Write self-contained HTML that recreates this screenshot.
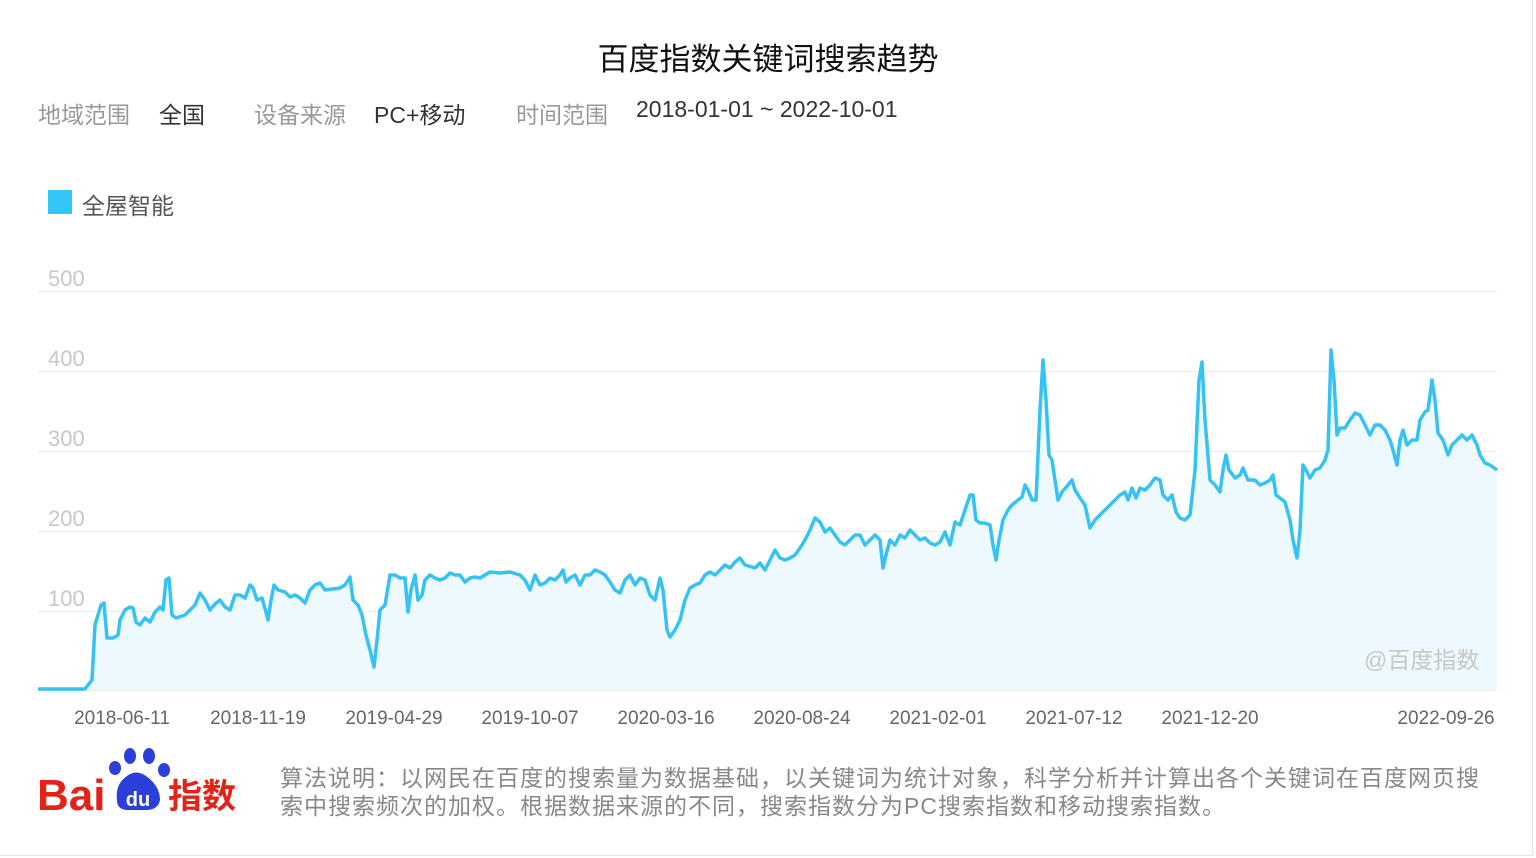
<!DOCTYPE html>
<html><head><meta charset="utf-8"><style>
body{margin:0;width:1536px;height:858px;background:#fff;overflow:hidden;font-family:"Liberation Sans","Noto Sans CJK SC",sans-serif;position:relative}
.frame{position:absolute;left:0;top:0;width:1532px;height:855px;border:1px solid #e4e4e4;border-top:none;border-left:none}
.t{position:absolute;white-space:nowrap}
</style></head><body>
<div class="frame"></div>
<div class="t" style="left:0;width:1536px;text-align:center;top:34px;font-size:31px;color:#111;font-weight:normal">百度指数关键词搜索趋势</div>
<div class="t" style="left:38px;top:96px;font-size:23px;color:#999">地域范围</div>
<div class="t" style="left:159px;top:96px;font-size:23px;color:#333">全国</div>
<div class="t" style="left:254px;top:96px;font-size:23px;color:#999">设备来源</div>
<div class="t" style="left:374px;top:96px;font-size:23px;color:#333">PC+移动</div>
<div class="t" style="left:516px;top:96px;font-size:23px;color:#999">时间范围</div>
<div class="t" style="left:636px;top:96px;font-size:23px;color:#333">2018-01-01 ~ 2022-10-01</div>
<div style="position:absolute;left:48px;top:190px;width:24px;height:24px;background:#34c5f5"></div>
<div class="t" style="left:82px;top:187px;font-size:23px;color:#555">全屋智能</div>
<svg style="position:absolute;left:0;top:0" width="1536" height="858">
<g stroke="#ececec" stroke-width="1">
<line x1="38" y1="291.5" x2="1497" y2="291.5"/><line x1="38" y1="371.5" x2="1497" y2="371.5"/><line x1="38" y1="451.5" x2="1497" y2="451.5"/><line x1="38" y1="531.5" x2="1497" y2="531.5"/><line x1="38" y1="611.5" x2="1497" y2="611.5"/><line x1="38" y1="690.5" x2="1497" y2="690.5"/>
</g>
<g fill="#c8c8c8" font-size="22" font-family="Liberation Sans,sans-serif">
<text x="48" y="286">500</text><text x="48" y="366">400</text><text x="48" y="446">300</text><text x="48" y="526">200</text><text x="48" y="606">100</text>
</g>
<polygon fill="#eef9fd" points="38,690 38,689 85,689 88,685 92,680 95,625 98,615 101,605 104,603 107,638 113,638 118,635 120,620 125,610 130,607 133,608 136,622 140,625 145,618 150,622 155,612 160,607 163,610 166,580 169,578 172,615 176,618 185,615 190,610 195,605 200,593 205,600 210,610 215,604 220,600 225,607 230,610 235,595 240,595 245,598 250,585 253,588 257,600 262,598 266,612 268,620 271,600 274,585 278,590 285,592 290,597 295,595 300,598 305,603 310,590 315,585 320,583 325,590 340,588 345,585 350,577 353,600 358,605 362,615 366,635 370,650 374,667 377,640 380,610 385,605 390,575 395,575 400,578 405,578 408,612 411,590 415,575 418,600 422,595 425,580 430,575 435,578 440,580 445,578 450,573 455,575 460,575 465,582 470,578 475,577 480,578 485,575 490,572 500,573 510,572 520,575 525,580 530,590 535,575 540,585 545,583 550,578 555,580 560,575 563,570 566,582 570,578 575,575 580,585 585,575 590,575 595,570 600,572 605,575 610,582 615,590 620,593 625,580 630,575 635,585 640,578 645,580 650,595 655,600 660,578 663,590 667,630 670,637 675,630 680,620 685,600 690,588 695,585 700,583 705,575 710,572 715,575 720,570 725,565 730,568 735,562 740,558 745,565 755,568 760,563 765,570 770,560 775,550 780,558 785,560 790,558 795,555 800,548 805,540 810,530 815,518 820,522 825,532 830,528 835,535 840,542 845,545 850,540 855,535 860,535 865,545 870,540 875,535 880,540 883,568 886,555 890,540 895,545 900,535 905,538 910,530 915,535 920,540 925,538 930,543 935,545 940,542 945,532 950,545 955,522 960,525 965,510 970,495 973,495 976,520 980,523 985,523 990,525 993,545 996,560 999,540 1003,520 1008,510 1012,505 1018,500 1022,497 1025,485 1028,490 1032,500 1036,500 1040,410 1043,360 1046,400 1049,455 1052,460 1055,480 1058,500 1062,492 1068,485 1072,480 1075,490 1080,498 1085,505 1090,528 1095,520 1100,515 1105,510 1110,505 1115,500 1120,495 1125,492 1128,500 1132,488 1136,498 1140,488 1145,490 1150,485 1155,478 1160,480 1163,495 1168,500 1172,495 1176,512 1180,518 1185,520 1190,515 1195,470 1199,380 1202,362 1205,420 1210,480 1215,485 1220,492 1223,470 1226,455 1229,470 1235,478 1240,475 1243,468 1248,480 1255,480 1260,485 1265,483 1270,480 1273,475 1276,495 1280,498 1285,502 1290,520 1293,540 1297,558 1300,530 1303,465 1306,470 1310,478 1315,470 1320,468 1325,460 1328,450 1331,350 1334,380 1337,435 1340,428 1345,428 1350,420 1355,413 1360,415 1365,425 1370,435 1375,425 1380,425 1385,430 1390,440 1393,450 1397,465 1400,440 1403,430 1407,445 1412,440 1417,440 1420,420 1425,412 1428,410 1432,380 1435,400 1438,433 1443,440 1448,455 1452,445 1457,440 1462,435 1467,440 1472,435 1477,445 1480,455 1485,463 1490,465 1497,470 1497,690"/>
<polyline fill="none" stroke="#36c2f2" stroke-width="3.5" stroke-linejoin="round" points="38,689 85,689 88,685 92,680 95,625 98,615 101,605 104,603 107,638 113,638 118,635 120,620 125,610 130,607 133,608 136,622 140,625 145,618 150,622 155,612 160,607 163,610 166,580 169,578 172,615 176,618 185,615 190,610 195,605 200,593 205,600 210,610 215,604 220,600 225,607 230,610 235,595 240,595 245,598 250,585 253,588 257,600 262,598 266,612 268,620 271,600 274,585 278,590 285,592 290,597 295,595 300,598 305,603 310,590 315,585 320,583 325,590 340,588 345,585 350,577 353,600 358,605 362,615 366,635 370,650 374,667 377,640 380,610 385,605 390,575 395,575 400,578 405,578 408,612 411,590 415,575 418,600 422,595 425,580 430,575 435,578 440,580 445,578 450,573 455,575 460,575 465,582 470,578 475,577 480,578 485,575 490,572 500,573 510,572 520,575 525,580 530,590 535,575 540,585 545,583 550,578 555,580 560,575 563,570 566,582 570,578 575,575 580,585 585,575 590,575 595,570 600,572 605,575 610,582 615,590 620,593 625,580 630,575 635,585 640,578 645,580 650,595 655,600 660,578 663,590 667,630 670,637 675,630 680,620 685,600 690,588 695,585 700,583 705,575 710,572 715,575 720,570 725,565 730,568 735,562 740,558 745,565 755,568 760,563 765,570 770,560 775,550 780,558 785,560 790,558 795,555 800,548 805,540 810,530 815,518 820,522 825,532 830,528 835,535 840,542 845,545 850,540 855,535 860,535 865,545 870,540 875,535 880,540 883,568 886,555 890,540 895,545 900,535 905,538 910,530 915,535 920,540 925,538 930,543 935,545 940,542 945,532 950,545 955,522 960,525 965,510 970,495 973,495 976,520 980,523 985,523 990,525 993,545 996,560 999,540 1003,520 1008,510 1012,505 1018,500 1022,497 1025,485 1028,490 1032,500 1036,500 1040,410 1043,360 1046,400 1049,455 1052,460 1055,480 1058,500 1062,492 1068,485 1072,480 1075,490 1080,498 1085,505 1090,528 1095,520 1100,515 1105,510 1110,505 1115,500 1120,495 1125,492 1128,500 1132,488 1136,498 1140,488 1145,490 1150,485 1155,478 1160,480 1163,495 1168,500 1172,495 1176,512 1180,518 1185,520 1190,515 1195,470 1199,380 1202,362 1205,420 1210,480 1215,485 1220,492 1223,470 1226,455 1229,470 1235,478 1240,475 1243,468 1248,480 1255,480 1260,485 1265,483 1270,480 1273,475 1276,495 1280,498 1285,502 1290,520 1293,540 1297,558 1300,530 1303,465 1306,470 1310,478 1315,470 1320,468 1325,460 1328,450 1331,350 1334,380 1337,435 1340,428 1345,428 1350,420 1355,413 1360,415 1365,425 1370,435 1375,425 1380,425 1385,430 1390,440 1393,450 1397,465 1400,440 1403,430 1407,445 1412,440 1417,440 1420,420 1425,412 1428,410 1432,380 1435,400 1438,433 1443,440 1448,455 1452,445 1457,440 1462,435 1467,440 1472,435 1477,445 1480,455 1485,463 1490,465 1497,470"/>
<g fill="#666" font-size="19" font-family="Liberation Sans,sans-serif" text-anchor="middle">
<text x="122" y="724">2018-06-11</text><text x="258" y="724">2018-11-19</text><text x="394" y="724">2019-04-29</text><text x="530" y="724">2019-10-07</text><text x="666" y="724">2020-03-16</text><text x="802" y="724">2020-08-24</text><text x="938" y="724">2021-02-01</text><text x="1074" y="724">2021-07-12</text><text x="1210" y="724">2021-12-20</text><text x="1446" y="724">2022-09-26</text>
</g>
<text x="1364" y="668" fill="#c8c8c8" font-size="23" font-family="Liberation Sans,Noto Sans CJK SC,sans-serif">@百度指数</text>
<text x="37" y="810" fill="#e2231a" font-size="44" font-weight="bold" font-family="Liberation Sans,sans-serif">Bai</text>
<g fill="#2c3fd8">
<ellipse cx="115" cy="768" rx="6" ry="7"/><ellipse cx="130" cy="756" rx="6" ry="8"/><ellipse cx="149" cy="756" rx="6" ry="8"/><ellipse cx="164" cy="770" rx="6" ry="7"/>
<path d="M117 800 Q115 784 127 776 Q136 769 146 776 Q160 786 160 800 Q158 810 146 810 L128 810 Q117 810 117 800Z"/>
</g>
<text x="138" y="806" fill="#fff" font-size="20" font-weight="bold" text-anchor="middle" font-family="Liberation Sans,sans-serif">du</text>
<text x="168" y="808" fill="#e2231a" font-size="34" font-weight="bold" font-family="Noto Sans CJK SC,sans-serif">指数</text>
</svg>
<div class="t" style="left:280px;top:764px;font-size:23px;letter-spacing:1px;color:#888;line-height:28px;white-space:normal;width:1215px">算法说明：以网民在百度的搜索量为数据基础，以关键词为统计对象，科学分析并计算出各个关键词在百度网页搜索中搜索频次的加权。根据数据来源的不同，搜索指数分为PC搜索指数和移动搜索指数。</div>
</body></html>
